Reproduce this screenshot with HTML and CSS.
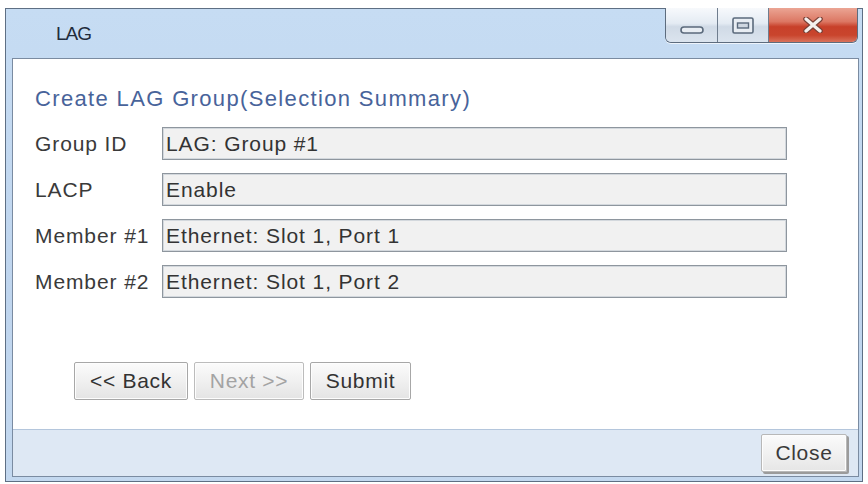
FILE: index.html
```html
<!DOCTYPE html>
<html>
<head>
<meta charset="utf-8">
<title>LAG</title>
<link rel="stylesheet" href="styles.css">
</head>
<body>
<div class="window">
  <div class="titlebar">
    <span class="title">LAG</span>
    <div class="controls">
      <div class="ctl ctl-min">
        <svg width="24" height="8" viewBox="0 0 24 8"><rect x="1" y="1" width="22" height="6" rx="3" fill="#e8edf3" stroke="#5b6a7c" stroke-width="1.6"/></svg>
      </div>
      <div class="ctl ctl-max">
        <svg width="22" height="17" viewBox="0 0 22 17"><rect x="1" y="1" width="20" height="15" rx="1.5" fill="#e8edf3" stroke="#5b6a7c" stroke-width="1.6"/><rect x="5.5" y="6" width="11" height="5" fill="#cfd7e1" stroke="#5b6a7c" stroke-width="1.4"/></svg>
      </div>
      <div class="ctl ctl-close">
        <svg width="20" height="16" viewBox="0 0 20 16"><path d="M3 2 L17 14 M17 2 L3 14" stroke="#7a4036" stroke-width="5.6" stroke-linecap="round"/><path d="M3 2 L17 14 M17 2 L3 14" stroke="#f4f0ee" stroke-width="3.2" stroke-linecap="round"/></svg>
      </div>
    </div>
  </div>
  <div class="client">
    <div class="content">
      <div class="heading">Create LAG Group(Selection Summary)</div>
      <div class="rows">
        <div class="row"><span class="label">Group ID</span><div class="field">LAG: Group #1</div></div>
        <div class="row"><span class="label">LACP</span><div class="field">Enable</div></div>
        <div class="row"><span class="label">Member #1</span><div class="field">Ethernet: Slot 1, Port 1</div></div>
        <div class="row"><span class="label">Member #2</span><div class="field">Ethernet: Slot 1, Port 2</div></div>
      </div>
      <div class="actions">
        <button class="btn btn-back">&lt;&lt; Back</button>
        <button class="btn btn-next" disabled>Next &gt;&gt;</button>
        <button class="btn btn-submit">Submit</button>
      </div>
    </div>
    <div class="footer">
      <button class="btn btn-close">Close</button>
    </div>
  </div>
</div>
</body>
</html>
```

FILE: styles.css
```css
html, body {
  margin: 0;
  padding: 0;
  background: #ffffff;
}

body {
  font-family: "Liberation Sans", Arial, sans-serif;
  color: #333;
}

.window {
  margin: 8px 0 0 5px;
  width: 858px;
  height: 474px;
  box-sizing: border-box;
  border: 1px solid #5e6f84;
  background: linear-gradient(#c6dcf3, #bfd5ee 60%, #c3d8ef);
  display: flex;
  flex-direction: column;
}

.titlebar {
  height: 49px;
  flex: none;
  display: flex;
  align-items: center;
}

.title {
  padding-left: 50px;
  font-size: 19px;
  color: #1f2b3b;
  letter-spacing: -1px;
}

.controls {
  margin-left: auto;
  margin-right: 4px;
  align-self: flex-start;
  margin-top: -1px;
  display: flex;
  height: 34px;
  border: 1px solid #5d6c7e;
  border-top: none;
  border-radius: 0 0 6px 6px;
  overflow: hidden;
  box-shadow: 0 1px 0 rgba(255,255,255,0.7);
}

.ctl {
  display: flex;
  align-items: center;
  justify-content: center;
  box-sizing: border-box;
}

.ctl-min {
  width: 52px;
  background: linear-gradient(#f7f9fc, #e4ebf3 45%, #d0dae6 55%, #dbe4ee);
  border-right: 1px solid #6f7d8e;
  padding-top: 9px;
}

.ctl-max {
  width: 51px;
  background: linear-gradient(#f7f9fc, #e4ebf3 45%, #d0dae6 55%, #dbe4ee);
  border-right: 1px solid #6f7d8e;
  padding-top: 1px;
}

.ctl-close {
  width: 88px;
  background: linear-gradient(#eba594, #dc7763 40%, #c8402a 55%, #c9452d 80%, #d9725c);
}

.client {
  flex: 1;
  margin: 0 3px 4px 6px;
  border: 1px solid #7a8ba1;
  display: flex;
  flex-direction: column;
  background: #ffffff;
}

.content {
  flex: 1;
  padding: 28px 0 0 22px;
}

.heading {
  font-size: 22px;
  line-height: 23px;
  letter-spacing: 1.35px;
  color: #48639a;
}

.rows {
  margin-top: 17px;
  display: flex;
  flex-direction: column;
  gap: 13px;
}

.row {
  display: flex;
  align-items: center;
  height: 33px;
}

.label {
  width: 127px;
  flex: none;
  font-size: 21px;
  letter-spacing: 0.9px;
  color: #3a3a3a;
}

.field {
  width: 625px;
  height: 33px;
  box-sizing: border-box;
  border: 1px solid #8e969e;
  box-shadow: inset 0 0 0 1px #d3d8dd;
  background: #f1f1f1;
  font-size: 21px;
  letter-spacing: 0.9px;
  color: #333;
  padding-left: 3px;
  display: flex;
  align-items: center;
}

.actions {
  margin-top: 64px;
  padding-left: 39px;
  display: flex;
  gap: 6px;
}

.btn {
  font-family: "Liberation Sans", Arial, sans-serif;
  font-size: 21px;
  letter-spacing: 0.7px;
  height: 38px;
  box-sizing: border-box;
  border: 1px solid #a7a7a7;
  border-radius: 2px;
  background: linear-gradient(#fbfbfb, #f0f0f0 50%, #e4e4e4);
  color: #333;
  padding: 0;
  box-shadow: inset 0 0 0 1px #fdfdfd;
}

.btn-back { width: 114px; }
.btn-next { width: 110px; color: #a3a3a3; border-color: #bcbcbc; }
.btn-submit { width: 101px; }

.footer {
  height: 47px;
  flex: none;
  box-sizing: border-box;
  border-top: 1px solid #b4c6dc;
  background: #dee8f4;
  display: flex;
  justify-content: flex-end;
  align-items: flex-start;
  padding: 4px 11px 0 0;
}

.btn-close {
  width: 86px;
  border-color: #b8b8b8;
  box-shadow: 2px 2px 0 #9b9b9b, inset 0 0 0 1px #fdfdfd;
  background: linear-gradient(#fbfbfb, #f1f1f1 50%, #e6e6e6);
  color: #3a3a3a;
}
```
